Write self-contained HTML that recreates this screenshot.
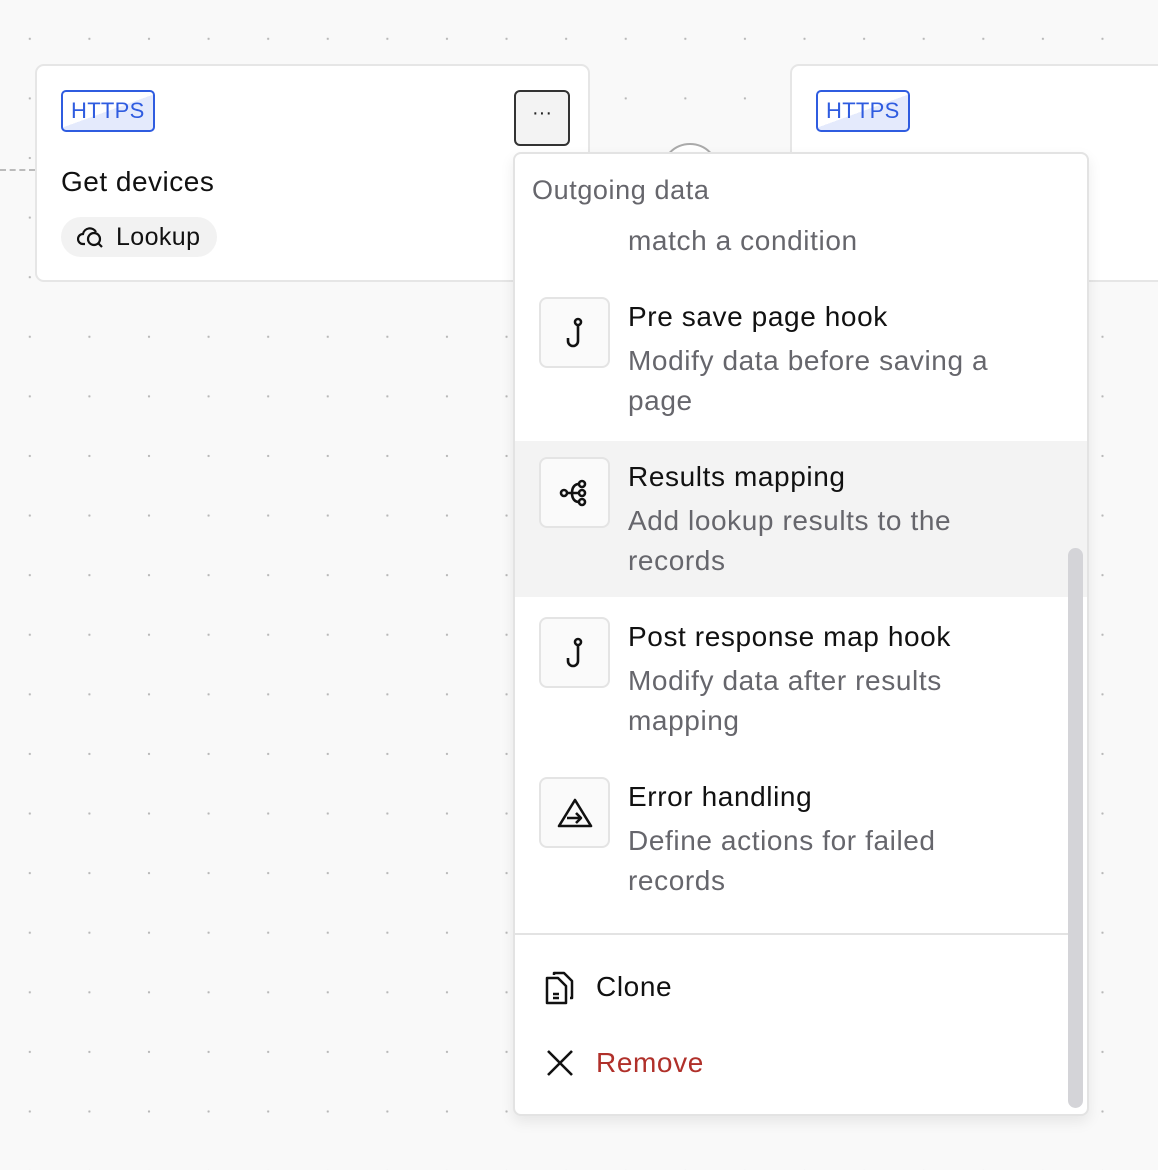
<!DOCTYPE html>
<html><head><style>
*{box-sizing:border-box;margin:0;padding:0}
body{width:1158px;height:1170px;overflow:hidden;background-color:#f9f9f9;background-image:radial-gradient(circle,#b8b8b8 1px,transparent 1.3px);background-size:59.6px 59.6px;background-position:0px 9px;font-family:"Liberation Sans",sans-serif;position:relative}
.card{position:absolute;background:#fff;border:2px solid #e6e6e6;border-radius:9px}
.https{position:absolute;border:2px solid #2f5ce0;border-radius:5px;color:#2f5ce0;font-size:22px;padding:4px 8px;background:linear-gradient(160deg,#fff 50%,#e4eafc 50%);line-height:30px;letter-spacing:0.3px}
.menu{position:absolute;left:513px;top:152px;width:576px;height:964px;background:#fff;border:2px solid #e3e3e3;border-radius:8px;box-shadow:0 6px 14px rgba(0,0,0,.08);overflow:hidden}
.t{position:absolute;font-size:28px;color:#111;letter-spacing:0.6px}
.d{position:absolute;font-size:28px;color:#66666c;line-height:40px;letter-spacing:0.6px}
.ib{position:absolute;left:24px;width:71px;height:71px;border:2px solid #e4e4e4;border-radius:8px;background:#fafafa;display:flex;align-items:center;justify-content:center}
</style></head><body>
<div style="position:absolute;left:0;top:169px;width:35px;border-top:2px dashed #bbb"></div>
<div style="position:absolute;left:661px;top:143px;width:58px;height:58px;border:2px solid #aaa;border-radius:50%;background:#fff"></div>
<div class="card" style="left:35px;top:64px;width:555px;height:218px">
 <div class="https" style="left:24px;top:24px">HTTPS</div>
 <div style="position:absolute;left:477px;top:24px;width:56px;height:56px;border:2px solid #333;border-radius:6px;background:#f3f3f3;text-align:center;line-height:42px;font-size:20px;color:#222">···</div>
 <div style="position:absolute;left:24px;top:100px;font-size:28px;color:#111;letter-spacing:0.5px">Get devices</div>
 <div style="position:absolute;left:24px;top:151px;height:40px;width:156px;border-radius:20px;background:#f2f2f2;font-size:25px;color:#111;line-height:40px;padding-left:55px;letter-spacing:0.4px">Lookup
  <svg style="position:absolute;left:16px;top:8px" width="30" height="24" viewBox="0 0 30 24" fill="none" stroke="#111" stroke-width="2.2"><path d="M8 19H6a5 5 0 0 1 0-10 7 7 0 0 1 13-2"/><circle cx="17" cy="14" r="6"/><path d="M21 18l4 4"/></svg></div>
</div>
<div class="card" style="left:790px;top:64px;width:400px;height:218px">
 <div class="https" style="left:24px;top:24px">HTTPS</div>
</div>
<div class="menu">
 <div style="position:absolute;left:17px;top:21px;font-size:27px;color:#66666c;letter-spacing:0.6px">Outgoing data</div>
 <div class="d" style="left:113px;top:67px">match a condition</div>

 <div class="ib" style="top:143px"><svg width="30" height="34" viewBox="0 0 30 34" fill="none" stroke="#111" stroke-width="2.6"><circle cx="18" cy="6" r="3"/><path d="M18 9v16a5 5 0 0 1-10 0v-3"/></svg></div>
 <div class="t" style="left:113px;top:147px">Pre save page hook</div>
 <div class="d" style="left:113px;top:187px">Modify data before saving a<br>page</div>

 <div style="position:absolute;left:0;top:287px;width:572px;height:156px;background:#f3f3f3"></div>
 <div class="ib" style="top:303px"><svg width="34" height="34" viewBox="0 0 34 34" fill="none" stroke="#111" stroke-width="2.6"><circle cx="6" cy="17" r="3"/><circle cx="24" cy="8" r="3"/><circle cx="24" cy="17" r="3"/><circle cx="24" cy="26" r="3"/><path d="M9 17h12M14 17c0-6 3-9 7-9M14 17c0 6 3 9 7 9"/></svg></div>
 <div class="t" style="left:113px;top:307px">Results mapping</div>
 <div class="d" style="left:113px;top:347px">Add lookup results to the<br>records</div>

 <div class="ib" style="top:463px"><svg width="30" height="34" viewBox="0 0 30 34" fill="none" stroke="#111" stroke-width="2.6"><circle cx="18" cy="6" r="3"/><path d="M18 9v16a5 5 0 0 1-10 0v-3"/></svg></div>
 <div class="t" style="left:113px;top:467px">Post response map hook</div>
 <div class="d" style="left:113px;top:507px">Modify data after results<br>mapping</div>

 <div class="ib" style="top:623px"><svg width="38" height="34" viewBox="0 0 38 34" fill="none" stroke="#111" stroke-width="2.6" stroke-linejoin="round"><path d="M19 4L35 30H3Z"/><path d="M11 22h14M20 17l5 5-5 5"/></svg></div>
 <div class="t" style="left:113px;top:627px">Error handling</div>
 <div class="d" style="left:113px;top:667px">Define actions for failed<br>records</div>

 <div style="position:absolute;left:0;top:779px;width:561px;border-top:2px solid #e3e3e3"></div>
 <svg style="position:absolute;left:29px;top:816px" width="34" height="36" viewBox="0 0 34 36" fill="none" stroke="#111" stroke-width="2.5" stroke-linejoin="round"><path d="M10 5V3h10l8 8v17h-2"/><path d="M3 8h11l8 8v17H3Z"/><path d="M9 24h6M9 28h6"/></svg>
 <div class="t" style="left:81px;top:817px">Clone</div>
 <svg style="position:absolute;left:31px;top:895px" width="28" height="28" viewBox="0 0 28 28" stroke="#111" stroke-width="2.6"><path d="M2 2l24 24M26 2L2 26"/></svg>
 <div class="t" style="left:81px;top:893px;color:#b0302a">Remove</div>

 <div style="position:absolute;left:553px;top:394px;width:15px;height:560px;border-radius:8px;background:#d4d4d8"></div>
</div>
</body></html>
